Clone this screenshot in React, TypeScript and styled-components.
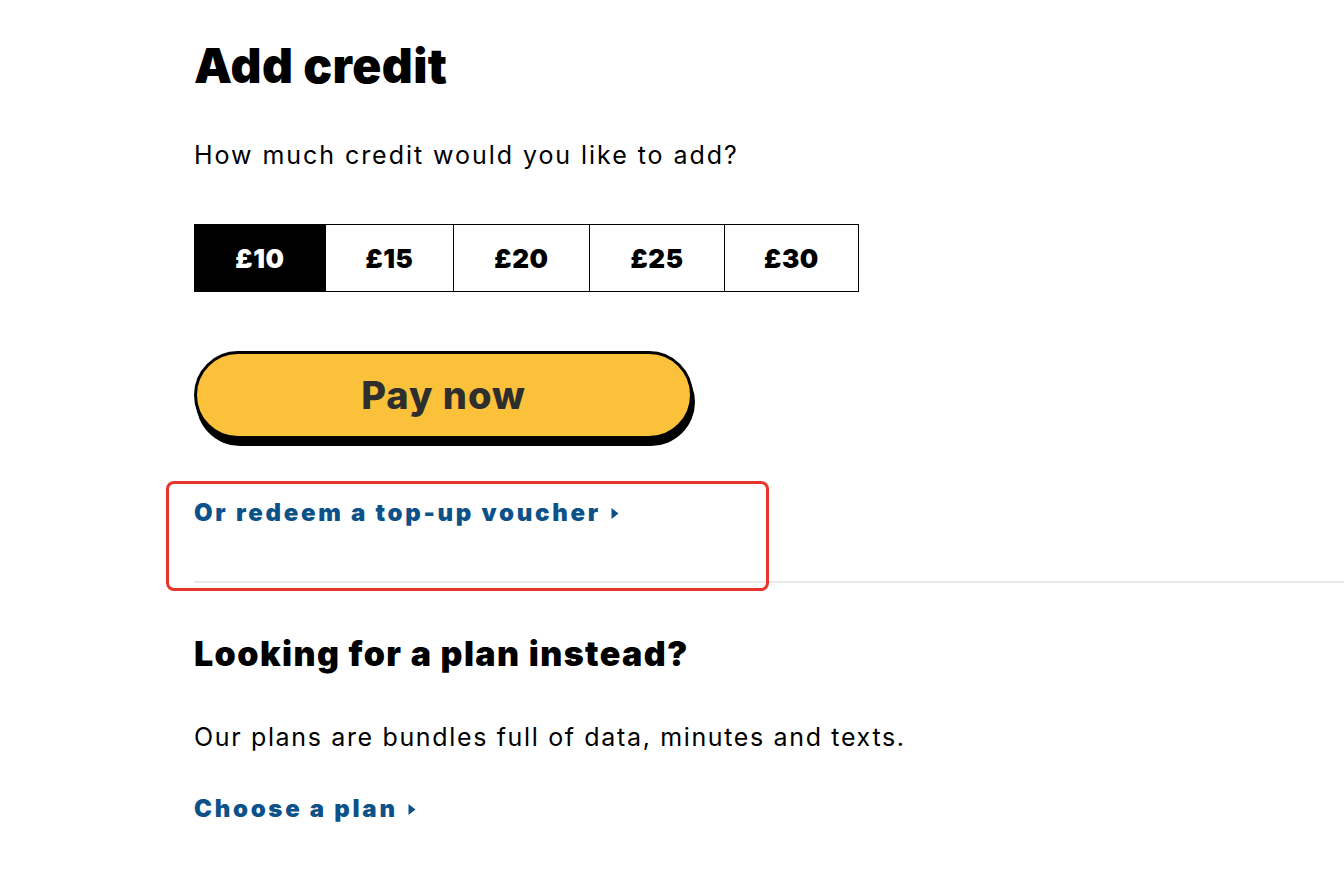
import React, { useState } from "react";
import styled, { createGlobalStyle } from "styled-components";

const Global = createGlobalStyle`
  html, body { margin: 0; padding: 0; background: #ffffff; }
  body { font-family: Inter, "Noto Sans", Arial, sans-serif; color: #000; }
  * { box-sizing: border-box; }
`;

const Page = styled.main`
  padding: 38px 0 40px 194px;
  display: flex;
  flex-direction: column;
`;

const Section = styled.section`
  display: flex;
  flex-direction: column;
  align-items: flex-start;
`;

const Title = styled.h1`
  margin: 0;
  font-size: 48px;
  line-height: 56px;
  font-weight: 900;
  letter-spacing: 0.4px;
`;

const Lead = styled.p<{ $top: number; $spacing: number }>`
  margin: ${(p) => p.$top}px 0 0;
  font-size: 25px;
  line-height: 32px;
  font-weight: 400;
  letter-spacing: ${(p) => p.$spacing}px;
`;

const Amounts = styled.div`
  margin-top: 53px;
  display: grid;
  grid-template-columns: 130px 128px 136px 135px 134px;
  border: 1.5px solid #000;
`;

const Amount = styled.button<{ $active: boolean }>`
  height: 66px;
  border: none;
  border-left: 1.5px solid #000;
  &:first-child { border-left: none; }
  background: ${(p) => (p.$active ? "#000" : "#fff")};
  color: ${(p) => (p.$active ? "#fff" : "#000")};
  font-family: Inter, Arial, sans-serif;
  font-size: 26px;
  font-weight: 900;
  letter-spacing: 0.6px;
  cursor: pointer;
  padding: 0;
`;

const PayButton = styled.button`
  margin-top: 59px;
  width: 499px;
  height: 88px;
  border: 3px solid #000;
  border-radius: 44px;
  background: #fbc13a;
  box-shadow: 2px 7px 0 #000;
  font-family: Inter, Arial, sans-serif;
  font-size: 38px;
  font-weight: 800;
  color: #2e2e2e;
  letter-spacing: 1px;
  cursor: pointer;
`;

const VoucherWrap = styled.div`
  position: relative;
  margin-top: 60px;
  align-self: stretch;
  padding-bottom: 54px;
  border-bottom: 2px solid #e8e8e8;
`;

const Highlight = styled.div`
  position: absolute;
  left: -28px;
  top: -18px;
  width: 603px;
  height: 110px;
  border: 3px solid #e8352b;
  border-radius: 8px;
  pointer-events: none;
`;

const TextLink = styled.a`
  display: inline-flex;
  align-items: center;
  gap: 10px;
  font-size: 24px;
  line-height: 28px;
  font-weight: 900;
  letter-spacing: 2.7px;
  color: #0c5188;
  text-decoration: none;
  cursor: pointer;
`;

const SubTitle = styled.h2`
  margin: 51px 0 0;
  font-size: 34px;
  line-height: 40px;
  font-weight: 900;
  letter-spacing: 1.4px;
`;

const LinkRow = styled.div`
  margin-top: 42px;
`;

const Caret = () => (
  <svg width="8" height="13" viewBox="0 0 8 13" aria-hidden="true">
    <path d="M0.5 1 L7.5 6.5 L0.5 12 Z" fill="currentColor" />
  </svg>
);

const values = [10, 15, 20, 25, 30];

export default function App() {
  const [selected, setSelected] = useState(10);
  return (
    <>
      <Global />
      <Page>
        <Section>
          <Title>Add credit</Title>
          <Lead $top={45} $spacing={1.95}>How much credit would you like to add?</Lead>
          <Amounts>
            {values.map((v) => (
              <Amount key={v} $active={v === selected} onClick={() => setSelected(v)}>
                £{v}
              </Amount>
            ))}
          </Amounts>
          <PayButton>Pay now</PayButton>
        </Section>
        <VoucherWrap>
          <Highlight />
          <TextLink>
            Or redeem a top-up voucher <Caret />
          </TextLink>
        </VoucherWrap>
        <Section>
          <SubTitle>Looking for a plan instead?</SubTitle>
          <Lead $top={47} $spacing={1.65}>Our plans are bundles full of data, minutes and texts.</Lead>
          <LinkRow>
            <TextLink>
              Choose a plan <Caret />
            </TextLink>
          </LinkRow>
        </Section>
      </Page>
    </>
  );
}
